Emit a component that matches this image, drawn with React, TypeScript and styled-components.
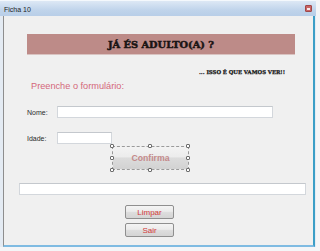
import React from "react";
import styled, { createGlobalStyle } from "styled-components";

const GlobalStyle = createGlobalStyle`
  html, body {
    margin: 0;
    padding: 0;
    background: #f4f5f7;
  }
  body {
    font-family: "Liberation Sans", Arial, sans-serif;
  }
  * {
    box-sizing: border-box;
  }
`;

const Window = styled.div`
  display: flex;
  flex-direction: column;
  width: 316px;
  height: 247px;
  background: #e4ebf3;
`;

const TitleBar = styled.div`
  display: flex;
  align-items: center;
  justify-content: space-between;
  height: 16px;
  padding: 0 4px 0 4px;
  background: linear-gradient(#dde8f5, #c0d4eb 60%, #b8cee8);
  border-top: 1px solid #f4f8fc;
`;

const TitleText = styled.span`
  font-size: 7px;
  color: #1c1c1c;
  padding-top: 1px;
`;

const CloseBox = styled.div`
  display: flex;
  align-items: center;
  justify-content: center;
  width: 7px;
  height: 7px;
  background: #c96464;
  border: 1px solid #a04848;
  border-radius: 1px;
`;

const CloseMark = styled.div`
  width: 3px;
  height: 2px;
  background: #f6e6e6;
`;

const Client = styled.div`
  position: relative;
  display: flex;
  flex-direction: column;
  align-items: flex-start;
  flex: 1;
  margin-left: 3px;
  width: 312px;
  background: #f0f0f0;
  border-left: 1px solid #8e8e8e;
  border-right: 2px solid #3b9ec7;
  border-bottom: 2px solid #7fbbe2;
`;

const Banner = styled.div`
  display: flex;
  align-items: center;
  justify-content: center;
  margin: 18px 0 0 23px;
  width: 268px;
  height: 21px;
  background: #bd8b88;
  border-bottom: 1px solid #d9c3c1;
`;

const BannerText = styled.h1`
  margin: 0;
  font-family: "DejaVu Serif", "Liberation Serif", serif;
  font-weight: 900;
  font-size: 9.8px;
  letter-spacing: 0;
  color: #1a1414;
  -webkit-text-stroke: 0.5px #1a1414;
`;

const Tagline = styled.div`
  align-self: flex-end;
  margin: 14px 28px 0 0;
  font-family: "DejaVu Serif", "Liberation Serif", serif;
  font-weight: 900;
  font-size: 5.3px;
  line-height: 7px;
  color: #141414;
  -webkit-text-stroke: 0.25px #141414;
`;

const Prompt = styled.div`
  margin: 5px 0 0 27px;
  font-size: 9.2px;
  line-height: 11px;
  color: #d4677a;
`;

const FieldRow = styled.div<{ $top: number }>`
  display: flex;
  align-items: center;
  margin-top: ${(p) => p.$top}px;
  padding-left: 23px;
`;

const FieldLabel = styled.label`
  width: 30px;
  font-size: 7px;
  color: #2a2a2a;
`;

const TextBox = styled.div<{ $width: number; $left?: number }>`
  width: ${(p) => p.$width}px;
  height: 12px;
  margin-left: ${(p) => p.$left ?? 0}px;
  background: #ffffff;
  border: 1px solid #d3d7dc;
  border-top-color: #c4c8cd;
`;

const Selection = styled.div`
  position: relative;
  margin: 2px 0 0 108px;
  width: 77px;
  height: 24px;
  border: 1px dashed #9a9a9a;
`;

const BigButton = styled.button`
  display: flex;
  align-items: center;
  justify-content: center;
  width: 100%;
  height: 100%;
  padding: 0;
  border: none;
  background: linear-gradient(#f3f3f3, #ececec 45%, #dcdcdc 50%, #d2d2d2);
  font-family: "Liberation Sans", Arial, sans-serif;
  font-weight: bold;
  font-size: 8.7px;
  color: #c48a8a;
`;

const Handle = styled.span`
  position: absolute;
  width: 4px;
  height: 4px;
  background: #ffffff;
  border: 1px solid #6c6c6c;
  border-radius: 1px;
`;

const SmallButton = styled.button<{ $top: number }>`
  display: flex;
  align-items: center;
  justify-content: center;
  margin: ${(p) => p.$top}px 0 0 121px;
  width: 49px;
  height: 14px;
  padding: 0;
  border: 1px solid #8f8f8f;
  border-radius: 2px;
  background: linear-gradient(#f4f4f4, #ebebeb 45%, #dedede 50%, #d4d4d4);
  font-family: "Liberation Sans", Arial, sans-serif;
  font-size: 8px;
  color: #d23a3a;
`;

const handleSpots = [
  { left: -3, top: -3 },
  { left: 35, top: -3 },
  { left: 73, top: -3 },
  { left: -3, top: 9 },
  { left: 73, top: 9 },
  { left: -3, top: 21 },
  { left: 35, top: 21 },
  { left: 73, top: 21 },
];

export default function App() {
  return (
    <>
      <GlobalStyle />
      <Window>
        <TitleBar>
          <TitleText>Ficha 10</TitleText>
          <CloseBox>
            <CloseMark />
          </CloseBox>
        </TitleBar>
        <Client>
          <Banner>
            <BannerText>JÁ ÉS ADULTO(A) ?</BannerText>
          </Banner>
          <Tagline>... ISSO É QUE VAMOS VER!!</Tagline>
          <Prompt>Preenche o formulário:</Prompt>
          <FieldRow $top={14}>
            <FieldLabel>Nome:</FieldLabel>
            <TextBox $width={216} />
          </FieldRow>
          <FieldRow $top={14}>
            <FieldLabel>Idade:</FieldLabel>
            <TextBox $width={55} />
          </FieldRow>
          <Selection>
            <BigButton>Confirma</BigButton>
            {handleSpots.map((h, i) => (
              <Handle key={i} style={{ left: h.left, top: h.top }} />
            ))}
          </Selection>
          <TextBox $width={287} $left={15} style={{ marginTop: 13 }} />
          <SmallButton $top={10}>Limpar</SmallButton>
          <SmallButton $top={4}>Sair</SmallButton>
        </Client>
      </Window>
    </>
  );
}
